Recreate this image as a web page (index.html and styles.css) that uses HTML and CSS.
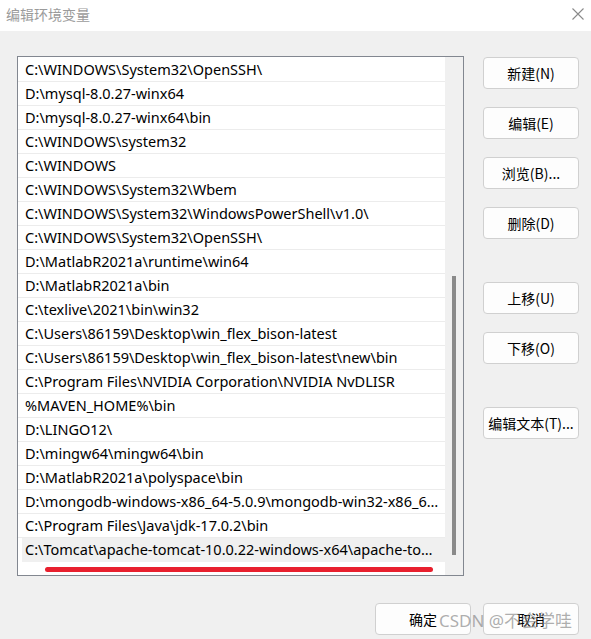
FILE: index.html
```html
<!DOCTYPE html>
<html lang="zh-CN">
<head>
<meta charset="utf-8">
<title>编辑环境变量</title>
<link rel="stylesheet" href="styles.css">
</head>
<body>
<div class="window">
  <div class="titlebar">
    <span class="title">编辑环境变量</span>
    <svg class="close" width="12" height="12" viewBox="0 0 12 12"><path d="M0.5 0.5 L11.5 11.5 M11.5 0.5 L0.5 11.5" stroke="#8a8a8a" stroke-width="1.1" fill="none"/></svg>
  </div>
  <div class="body">
    <div class="main">
      <div class="listbox">
        <div class="rows">
          <div class="row">C:\WINDOWS\System32\OpenSSH\</div>
          <div class="row">D:\mysql-8.0.27-winx64</div>
          <div class="row">D:\mysql-8.0.27-winx64\bin</div>
          <div class="row">C:\WINDOWS\system32</div>
          <div class="row">C:\WINDOWS</div>
          <div class="row">C:\WINDOWS\System32\Wbem</div>
          <div class="row">C:\WINDOWS\System32\WindowsPowerShell\v1.0\</div>
          <div class="row">C:\WINDOWS\System32\OpenSSH\</div>
          <div class="row">D:\MatlabR2021a\runtime\win64</div>
          <div class="row">D:\MatlabR2021a\bin</div>
          <div class="row">C:\texlive\2021\bin\win32</div>
          <div class="row">C:\Users\86159\Desktop\win_flex_bison-latest</div>
          <div class="row">C:\Users\86159\Desktop\win_flex_bison-latest\new\bin</div>
          <div class="row">C:\Program Files\NVIDIA Corporation\NVIDIA NvDLISR</div>
          <div class="row">%MAVEN_HOME%\bin</div>
          <div class="row">D:\LINGO12\</div>
          <div class="row">D:\mingw64\mingw64\bin</div>
          <div class="row">D:\MatlabR2021a\polyspace\bin</div>
          <div class="row">D:\mongodb-windows-x86_64-5.0.9\mongodb-win32-x86_6…</div>
          <div class="row">C:\Program Files\Java\jdk-17.0.2\bin</div>
          <div class="row selected">C:\Tomcat\apache-tomcat-10.0.22-windows-x64\apache-to…</div>
        </div>
        <div class="scrolltrack"><div class="thumb"></div></div>
        <div class="redline"></div>
      </div>
      <div class="side">
        <div class="group">
          <button class="btn">新建(N)</button>
          <button class="btn">编辑(E)</button>
          <button class="btn">浏览(B)...</button>
          <button class="btn">删除(D)</button>
        </div>
        <div class="group move">
          <button class="btn">上移(U)</button>
          <button class="btn">下移(O)</button>
        </div>
        <div class="group text">
          <button class="btn">编辑文本(T)...</button>
        </div>
      </div>
    </div>
    <div class="footer">
      <button class="btn">确定</button>
      <button class="btn">取消</button>
    </div>
    <div class="watermark">CSDN @不会学哇</div>
  </div>
</div>
</body>
</html>
```

FILE: styles.css
```css
* { box-sizing: border-box; }
html, body { margin: 0; padding: 0; }
body {
  width: 591px;
  height: 639px;
  overflow: hidden;
  font-family: "Noto Sans", "Noto Sans CJK SC", sans-serif;
  font-size: 14px;
  color: #000;
}
.window {
  width: 591px;
  height: 639px;
  display: flex;
  flex-direction: column;
  background: #f0f0f0;
}
.titlebar {
  height: 31px;
  background: #fff;
  display: flex;
  align-items: center;
  justify-content: space-between;
  padding: 0 7px 4px 6px;
  flex: none;
}
.title {
  font-family: "Noto Sans CJK SC", sans-serif;
  font-size: 14px;
  color: #9b9b9b;
}
.close { display: block; }
.body {
  position: relative;
  flex: 1;
  display: flex;
  flex-direction: column;
  padding: 25px 12px 0 17px;
}
.main {
  display: flex;
  gap: 19px;
}
.listbox {
  position: relative;
  width: 448px;
  height: 520px;
  border: 1px solid #828790;
  background: #fff;
  display: flex;
  padding-top: 1px;
}
.rows {
  width: 427px;
  flex: none;
}
.row {
  height: 24px;
  line-height: 23px;
  border-bottom: 1px solid #ececec;
  padding-left: 7px;
  white-space: nowrap;
  overflow: hidden;
  font-size: 14.5px;
}
.row.selected {
  background: #f0f0f0;
  margin-left: 4px;
  padding-left: 3px;
  border-bottom-color: #f0f0f0;
}
.scrolltrack {
  flex: 1;
  background: #f0f0f0;
  margin-top: -1px;
  padding: 219px 0 0 7px;
}
.thumb {
  width: 4px;
  height: 279px;
  background: #8a8a8a;
}
.redline {
  position: absolute;
  left: 27px;
  top: 510px;
  width: 388px;
  height: 5px;
  border-radius: 3px;
  background: #e8202e;
}
.side {
  display: flex;
  flex-direction: column;
  padding-top: 1px;
}
.group {
  display: flex;
  flex-direction: column;
  gap: 18px;
}
.group.move { margin-top: 43px; }
.group.text { margin-top: 43px; }
.btn {
  width: 96px;
  height: 32px;
  border: 1px solid #d0d0d0;
  border-radius: 4px;
  background: #fdfdfd;
  font-family: "Noto Sans CJK SC", sans-serif;
  font-size: 14px;
  color: #000;
  padding: 0;
}
.footer {
  display: flex;
  justify-content: flex-end;
  gap: 12px;
  margin-top: 27px;
}
.watermark {
  position: absolute;
  left: 439px;
  top: 576px;
  font-family: "Noto Sans", "Noto Sans CJK SC", sans-serif;
  font-size: 17px;
  color: rgba(120, 120, 120, 0.6);
  white-space: nowrap;
}
```
